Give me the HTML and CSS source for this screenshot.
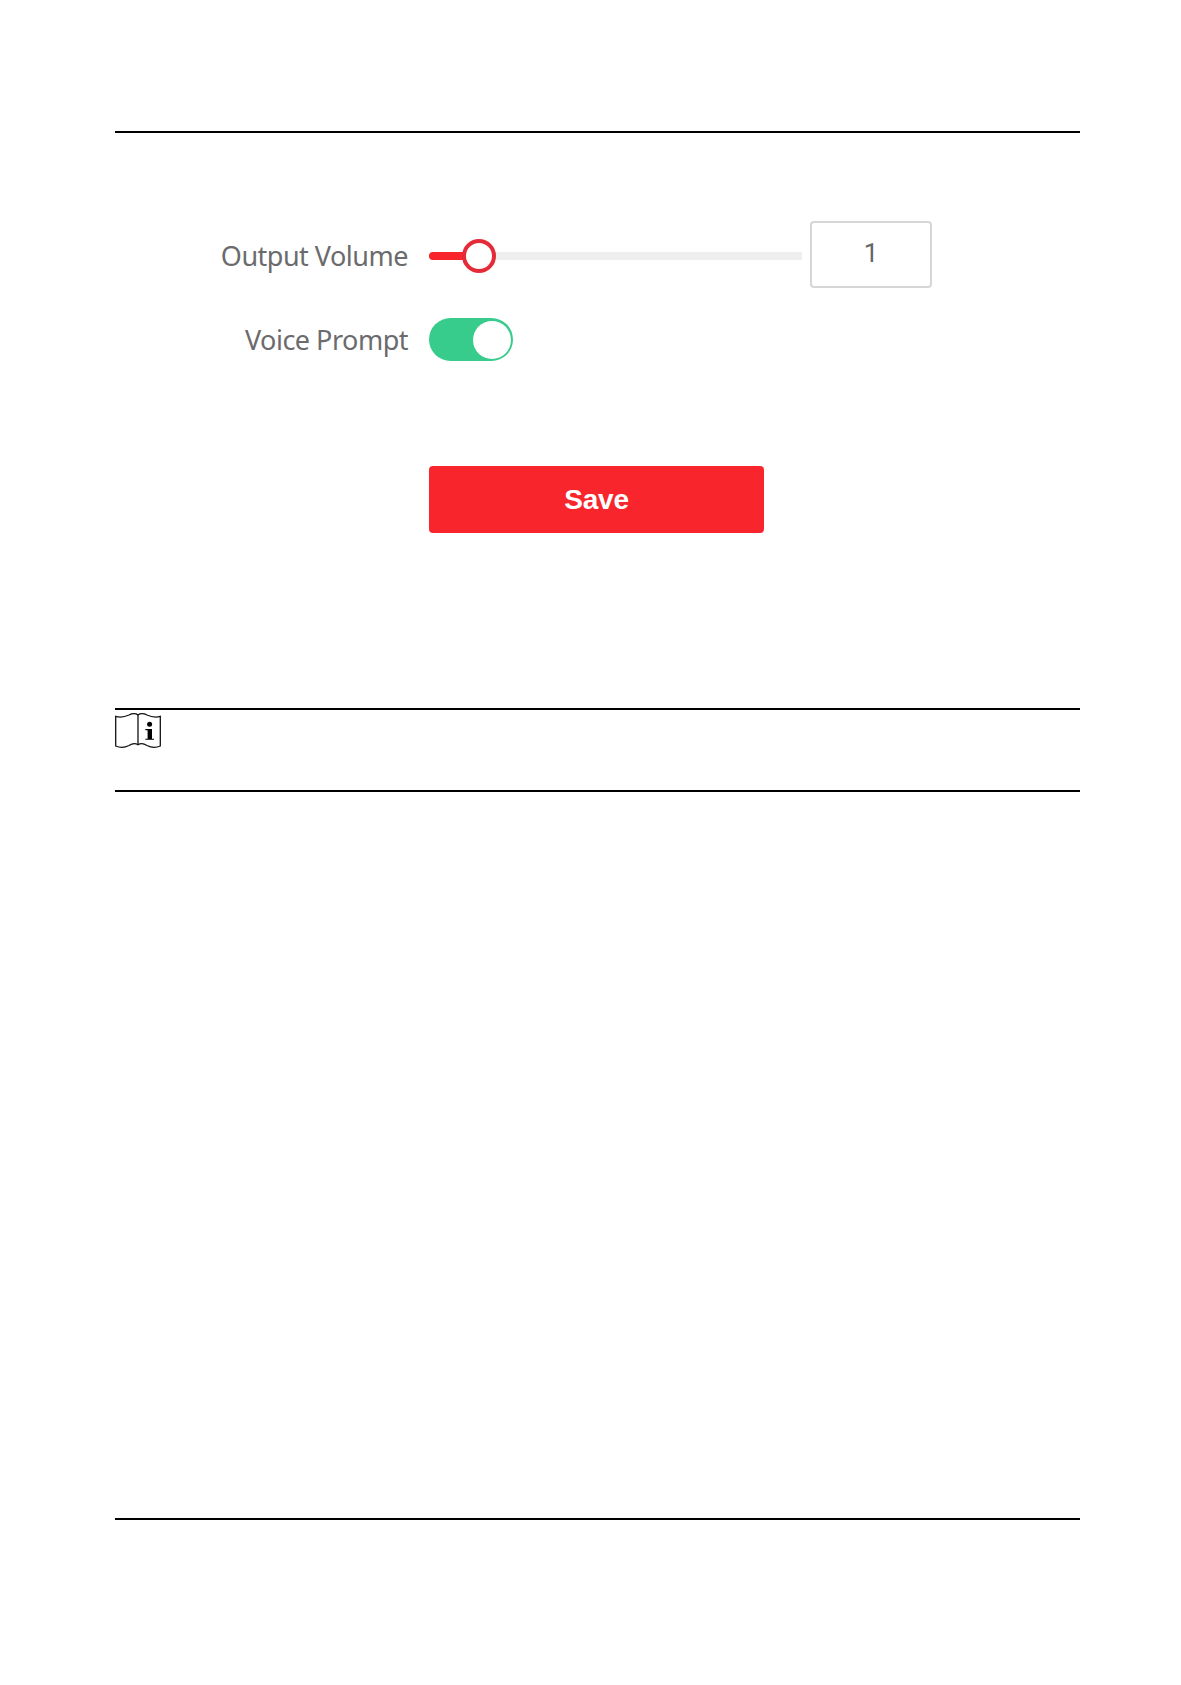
FILE: index.html
```html
<!DOCTYPE html>
<html lang="en">
<head>
  <meta charset="UTF-8" />
  <meta name="viewport" content="width=device-width, initial-scale=1.0"/>
  <title>Audio Settings</title>
  <link rel="stylesheet" href="styles.css">
</head>
<body>

  <main class="page">
    <form class="settings">
      <div class="row volume-row">
        <span class="label" id="volumeLabel">Output Volume</span>
        <div class="slider" role="slider" aria-labelledby="volumeLabel" aria-valuemin="0" aria-valuemax="10" aria-valuenow="1">
          <div class="slider-fill"></div>
          <div class="slider-handle"></div>
        </div>
        <div class="volume-value">1</div>
      </div>

      <div class="row prompt-row">
        <span class="label" id="promptLabel">Voice Prompt</span>
        <div class="toggle" role="switch" aria-checked="true" aria-labelledby="promptLabel">
          <div class="toggle-knob"></div>
        </div>
      </div>

      <button type="button" class="save-btn">Save</button>
    </form>

    <!-- Note box -->
    <section class="note">
      <svg class="note-icon" viewBox="0 0 46 36" fill="none" stroke="#111" stroke-width="1.3">
        <path d="M.7 3.300C6 5 10 3.800 14 2C17 .3 21 .3 23 2C25 .3 29 .3 32 2C36 3.800 40 5 45.300 3.300V33C40 35.200 36 34.500 32 32.500C29 30.500 25.500 30 23 31.800C20.500 30 17 30.500 14 32.500C10 34.500 6 35.200 .7 33Z"/>
        <path d="M23 2V31.800"/>
        <circle cx="34.600" cy="11.200" r="2.500" fill="#000" stroke="none"/>
        <path d="M30.300 16H37V25.700H39V26.800H30.300V25.700H32.600V17.200H30.300Z" fill="#000" stroke="none"/>
      </svg>
    </section>
  </main>

</body>
</html>
```
FILE: styles.css
```css
:root {
  --red: #f8252c;
  --green: #38cc8c;
  --text: #6b6b6e;
}

* {
  box-sizing: border-box;
}

body {
  margin: 0;
  background: #fff;
  font-family: 'Noto Sans', sans-serif;
}

.page {
  width: 965px;
  height: 1389px;
  margin: 131px 0 0 115px;
  border-top: 2px solid #000;
  border-bottom: 2px solid #000;
}

.settings {
  height: 575px;
  padding-top: 88px;
}

.row {
  display: flex;
  align-items: center;
}

.label {
  width: 293px;
  margin-right: 21px;
  color: var(--text);
  font-size: 27px;
  line-height: 36px;
  letter-spacing: -0.5px;
  text-align: right;
  white-space: nowrap;
}

.volume-row {
  height: 67px;
}

.volume-row .label {
  padding-top: 3px;
}

.slider {
  display: flex;
  align-items: center;
  width: 373px;
  height: 8px;
  margin: 2px 8px 0 0;
  background: #eee;
  border-radius: 4px 0 0 4px;
}

.slider-fill {
  width: 36px;
  height: 8px;
  background: var(--red);
  border-radius: 4px 0 0 4px;
}

.slider-handle {
  width: 34px;
  height: 34px;
  margin-left: -3px;
  background: #fff;
  border: 4px solid #e42b38;
  border-radius: 50%;
}

.volume-value {
  width: 122px;
  height: 67px;
  border: 2px solid #d6d6d6;
  border-radius: 4px;
  color: #666;
  font-family: Roboto, sans-serif;
  font-size: 26px;
  line-height: 60px;
  text-align: center;
}

.prompt-row {
  height: 43px;
  margin-top: 30px;
}

.prompt-row .label {
  padding-top: 1px;
}

.toggle {
  display: flex;
  align-items: center;
  justify-content: flex-end;
  width: 84px;
  height: 43px;
  padding-right: 2px;
  background: var(--green);
  border-radius: 22px;
}

.toggle-knob {
  width: 38px;
  height: 38px;
  background: #fff;
  border-radius: 50%;
}

.save-btn {
  display: block;
  width: 335px;
  height: 67px;
  margin: 105px 0 0 314px;
  padding: 0;
  background: var(--red);
  border: none;
  border-radius: 4px;
  color: #fff;
  font-family: 'Liberation Sans', sans-serif;
  font-size: 28px;
  font-weight: bold;
  letter-spacing: -0.2px;
  cursor: pointer;
}

.note {
  height: 84px;
  padding-top: 3px;
  border-top: 2px solid #000;
  border-bottom: 2px solid #000;
}

.note-icon {
  display: block;
  width: 46px;
  height: 36px;
}
```
